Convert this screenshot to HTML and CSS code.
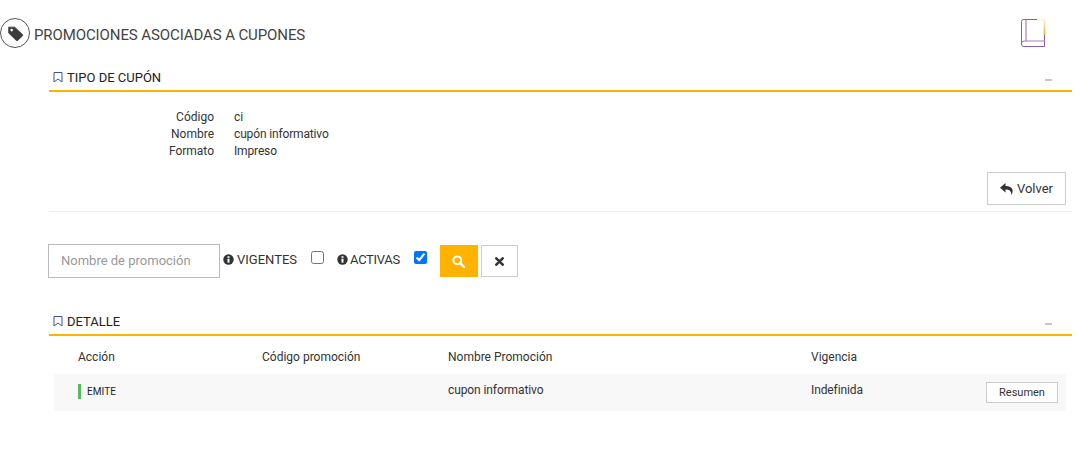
FILE: index.html
```html
<!DOCTYPE html>
<html lang="es">
<head>
  <meta charset="UTF-8">
  <meta name="viewport" content="width=device-width, initial-scale=1.0">
  <title>Promociones asociadas a cupones</title>
  <link rel="stylesheet" href="styles.css">
</head>

<body>
  <header class="page-header">
    <div class="page-title">
      <span class="title-icon">
        <svg width="17" height="17" viewBox="0 0 20 20">
          <path d="M2 2.5 L9 2.5 L18.2 11.2 Q19 12 18.2 12.8 L12.6 18.2 Q11.8 19 11 18.2 L2 9.5 Z" fill="#3c3c3c" stroke="#3c3c3c" stroke-linejoin="round"/>
          <circle cx="5.5" cy="6" r="1.5" fill="#fff"/>
        </svg>
      </span>
      <h1>PROMOCIONES ASOCIADAS A CUPONES</h1>
    </div>
    <svg class="book-icon" width="26" height="30" viewBox="0 0 26 30">
      <defs>
        <linearGradient id="glint" x1="0" y1="0" x2="0" y2="1">
          <stop offset="0" stop-color="#fff4cf"/>
          <stop offset="1" stop-color="#e2a92c"/>
        </linearGradient>
      </defs>
      <path d="M17 1.5 H3.5 Q1.5 1.5 1.5 3.5 V26 Q1.5 28.5 4 28.5 H24.5 V17" fill="none" stroke="#8b5c9f" stroke-width="1"/>
      <path d="M6 1.5 V23 M2 24 Q3 23 5 23 H24.5" fill="none" stroke="#a582b4" stroke-width="1.2"/>
      <path d="M17 1.5 H22.5 Q24.5 1.5 24.5 3.5 V17" fill="none" stroke="url(#glint)" stroke-width="1.6"/>
    </svg>
  </header>

  <section class="panel">
    <div class="panel-head">
      <h2>
        <svg class="mark" width="10" height="11" viewBox="0 0 10 11"><path d="M1 .5 H9 V10 L5 7 L1 10 Z" fill="none" stroke="#3f51a5" stroke-width="1"/></svg>
        TIPO DE CUPÓN
      </h2>
      <span class="collapse"></span>
    </div>
    <dl class="info">
      <dt>Código</dt><dd>ci</dd>
      <dt>Nombre</dt><dd>cupón informativo</dd>
      <dt>Formato</dt><dd>Impreso</dd>
    </dl>
    <div class="back-row">
      <button class="btn btn-back">
        <svg width="14" height="12" viewBox="0 0 14 12"><path d="M5.5 0 L0 4.7 L5.5 9.4 V6.5 C9 6.5 11 7.2 11.5 12 C13.5 8.5 13.8 3 5.5 3 Z" fill="#333"/></svg>
        Volver
      </button>
    </div>
  </section>

  <form class="filters">
    <input class="search-input" type="text" placeholder="Nombre de promoción">
    <label class="filter filter-first">
      <svg class="info-icon" width="11" height="11" viewBox="0 0 11 11"><circle cx="5.5" cy="5.5" r="5.2" fill="#333"/><rect x="4.5" y="4.7" width="2" height="3.9" fill="#fff"/><rect x="4.5" y="2.2" width="2" height="1.6" fill="#fff"/></svg>
      <span>VIGENTES</span>
      <input type="checkbox">
    </label>
    <label class="filter">
      <svg class="info-icon" width="11" height="11" viewBox="0 0 11 11"><circle cx="5.5" cy="5.5" r="5.2" fill="#333"/><rect x="4.5" y="4.7" width="2" height="3.9" fill="#fff"/><rect x="4.5" y="2.2" width="2" height="1.6" fill="#fff"/></svg>
      <span class="filter-tight">ACTIVAS</span>
      <input type="checkbox" checked>
    </label>
    <button type="button" class="btn btn-search">
      <svg width="13" height="13" viewBox="0 0 13 13"><circle cx="5.3" cy="5.3" r="3.9" fill="none" stroke="#fff" stroke-width="2"/><path d="M8.2 8.2 L12 12" stroke="#fff" stroke-width="2.4" stroke-linecap="round"/></svg>
    </button>
    <button type="button" class="btn btn-clear">
      <svg width="9" height="9" viewBox="0 0 9 9"><path d="M1.3 1.3 L7.7 7.7 M7.7 1.3 L1.3 7.7" stroke="#333" stroke-width="2.5" stroke-linecap="round"/></svg>
    </button>
  </form>

  <section class="panel panel-detail">
    <div class="panel-head">
      <h2>
        <svg class="mark" width="10" height="11" viewBox="0 0 10 11"><path d="M1 .5 H9 V10 L5 7 L1 10 Z" fill="none" stroke="#3f51a5" stroke-width="1"/></svg>
        DETALLE
      </h2>
      <span class="collapse"></span>
    </div>
    <div class="grid-row grid-head">
      <div>Acción</div>
      <div>Código promoción</div>
      <div>Nombre Promoción</div>
      <div>Vigencia</div>
    </div>
    <div class="grid-row grid-item">
      <div class="cell-status"><span class="status">EMITE</span></div>
      <div></div>
      <div class="cell-text">cupon informativo</div>
      <div class="cell-text">Indefinida</div>
      <button class="btn btn-summary">Resumen</button>
    </div>
  </section>
</body>
</html>
```

FILE: styles.css
```css
body {
  margin: 0;
  background-color: #fff;
  color: #333;
  font-family: Roboto, "Liberation Sans", sans-serif;
  font-size: 12px;
}

.page-header {
  display: flex;
  justify-content: space-between;
  align-items: center;
  height: 50px;
  padding: 8px 36px 8px 0;
}

.page-title {
  display: flex;
  align-items: center;
  gap: 4px;
}

.title-icon {
  display: flex;
  align-items: center;
  justify-content: center;
  width: 28px;
  height: 28px;
  border: 1px solid #555;
  border-radius: 50%;
  background-color: #fff;
}

.page-title h1 {
  margin: 0;
  padding-top: 3px;
  font-size: 15px;
  font-weight: 400;
  letter-spacing: -0.1px;
  color: #444;
}

.book-icon {
  display: block;
}

.panel {
  margin: 0 10px 0 49px;
}

.panel-head {
  display: flex;
  justify-content: space-between;
  align-items: center;
  height: 24px;
  padding: 0 20px 0 4px;
  border-bottom: 2px solid #ffb300;
}

.panel-head h2 {
  display: flex;
  align-items: center;
  gap: 4px;
  margin: 0;
  padding-bottom: 2px;
  font-size: 13px;
  font-weight: 400;
  color: #222;
}

.collapse {
  width: 7px;
  height: 2px;
  margin-top: 4px;
  background-color: #c4c4c4;
}

.info {
  display: grid;
  grid-template-columns: 165px 1fr;
  column-gap: 20px;
  margin: 17px 0 0;
  line-height: 17px;
}

.info dt {
  text-align: right;
}

.info dd {
  margin: 0;
  letter-spacing: -0.15px;
}

.back-row {
  display: flex;
  justify-content: flex-end;
  margin-top: 12px;
  padding: 0 6px 6px 0;
  border-bottom: 1px solid #f0f0f0;
}

.btn {
  display: flex;
  align-items: center;
  justify-content: center;
  background-color: #fff;
  border: 1px solid #ccc;
  color: #333;
  font-family: inherit;
  cursor: pointer;
}

.btn-back {
  gap: 3px;
  width: 79px;
  height: 33px;
  font-size: 13px;
}

.filters {
  display: flex;
  align-items: center;
  margin: 32px 0 0 48px;
  height: 34px;
}

.search-input {
  box-sizing: border-box;
  width: 172px;
  height: 34px;
  padding: 0 12px 2px;
  border: 1px solid #bbb;
  font-family: inherit;
  font-size: 13px;
}

.search-input::placeholder {
  color: #999;
}

.filter {
  display: flex;
  align-items: center;
  margin-left: 13px;
  margin-bottom: 4px;
  font-size: 13px;
}

.filter-first {
  margin-left: 3px;
}

.filter-tight {
  margin-left: -1px;
  letter-spacing: -0.3px;
}

.info-icon {
  margin-right: 3px;
}

.filter input {
  width: 13px;
  height: 13px;
  margin: 0 0 3px 14px;
}

.btn-search {
  width: 38px;
  height: 32px;
  margin-left: 13px;
  background-color: #ffb300;
  border: none;
}

.btn-clear {
  box-sizing: border-box;
  width: 37px;
  height: 32px;
  margin-left: 3px;
}

.panel-detail {
  margin-top: 32px;
}

.grid-row {
  display: grid;
  grid-template-columns: 184px 186px 363px 175px 72px;
  align-items: center;
  margin: 0 6px 0 5px;
  padding-left: 24px;
}

.grid-head {
  box-sizing: border-box;
  height: 38px;
  padding-top: 4px;
}

.grid-item {
  height: 37px;
  background-color: #f8f8f8;
}

.cell-text {
  padding-bottom: 5px;
  letter-spacing: -0.1px;
}

.cell-status {
  display: flex;
  padding-bottom: 3px;
}

.status {
  display: inline-block;
  height: 15px;
  padding-left: 6px;
  border-left: 3px solid #5cb85c;
  font-size: 10px;
  line-height: 15px;
  letter-spacing: 0.1px;
  color: #222;
}

.btn-summary {
  box-sizing: border-box;
  height: 21px;
  font-size: 11px;
}
```
